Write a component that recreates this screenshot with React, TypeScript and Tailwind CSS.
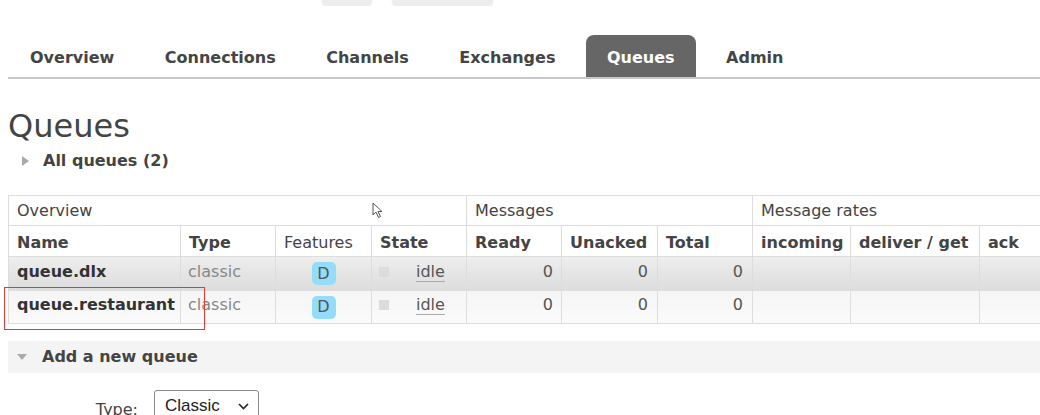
import React from "react";

const tabs = ["Overview", "Connections", "Channels", "Exchanges", "Queues", "Admin"];

const queues = [
  { name: "queue.dlx", type: "classic", state: "idle", ready: 0, unacked: 0, total: 0 },
  { name: "queue.restaurant", type: "classic", state: "idle", ready: 0, unacked: 0, total: 0 },
];

function Cursor() {
  return (
    <svg width="11" height="17" viewBox="0 0 11 17" className="absolute left-[372px] top-[202px]">
      <path d="M1 1 L1 13 L4 10 L6.5 15.5 L8.5 14.5 L6 9.5 L10 9.5 Z" fill="#fff" stroke="#555" strokeWidth="1" strokeLinejoin="round" />
    </svg>
  );
}

export default function App() {
  return (
    <div className="w-[1040px] h-[415px] overflow-hidden bg-white font-['DejaVu_Sans',Verdana,sans-serif] text-[16px] text-[#444]">
      {/* header strip, mostly scrolled off */}
      <div className="h-[6px] flex items-end overflow-hidden">
        <div className="ml-[322px] h-[20px] w-[50px] rounded-[5px] bg-[#ededed] shadow-[0_1px_2px_rgba(0,0,0,0.08)]" />
        <div className="ml-[20px] h-[20px] w-[101px] rounded-[5px] bg-[#ededed] shadow-[0_1px_2px_rgba(0,0,0,0.08)]" />
      </div>

      {/* tabs */}
      <nav className="mt-[29px] ml-2 pl-[2px] flex gap-[10.5px] border-b-2 border-[#c8c8c8]">
        {tabs.map((t) => (
          <div
            key={t}
            className={
              t === "Queues"
                ? "h-[42px] px-[21px] pt-[3px] flex items-center rounded-t-[8px] bg-[#666] text-white font-bold"
                : "h-[42px] px-5 pt-[3px] flex items-center font-bold text-[#444]"
            }
          >
            {t}
          </div>
        ))}
      </nav>

      <h1 className="mt-[29px] ml-2 text-[32px] leading-[37px] font-normal text-[#444]">Queues</h1>

      <div className="mt-[6px] pl-[22px] flex items-center gap-[14px] leading-[20px]">
        <span className="w-0 h-0 border-y-[5px] border-y-transparent border-l-[7px] border-l-[#aaa]" />
        <span className="font-bold">All queues (2)</span>
      </div>

      {/* queues table */}
      <div className="relative mt-[24px] ml-2">
        <table className="table-fixed border-collapse w-[1071px] text-left">
          <colgroup>
            <col className="w-[172px]" />
            <col className="w-[95px]" />
            <col className="w-[96px]" />
            <col className="w-[95px]" />
            <col className="w-[95px]" />
            <col className="w-[96px]" />
            <col className="w-[95px]" />
            <col className="w-[98px]" />
            <col className="w-[129px]" />
            <col className="w-[100px]" />
          </colgroup>
          <thead>
            <tr className="h-[30px]">
              <th colSpan={4} className="border border-[#ddd] px-2 pt-[1px] font-normal">Overview</th>
              <th colSpan={3} className="border border-[#ddd] px-2 pt-[1px] font-normal">Messages</th>
              <th colSpan={3} className="border border-[#ddd] px-2 pt-[1px] font-normal">Message rates</th>
            </tr>
            <tr className="h-[31px]">
              <th className="border border-[#ddd] px-2 pt-[3px] font-bold">Name</th>
              <th className="border border-[#ddd] px-2 pt-[3px] font-bold">Type</th>
              <th className="border border-[#ddd] px-2 pt-[3px] font-normal">Features</th>
              <th className="border border-[#ddd] px-2 pt-[3px] font-bold">State</th>
              <th className="border border-[#ddd] px-2 pt-[3px] font-bold">Ready</th>
              <th className="border border-[#ddd] px-2 pt-[3px] font-bold">Unacked</th>
              <th className="border border-[#ddd] px-2 pt-[3px] font-bold">Total</th>
              <th className="border border-[#ddd] px-2 pt-[3px] font-bold">incoming</th>
              <th className="border border-[#ddd] px-2 pt-[3px] font-bold">deliver / get</th>
              <th className="border border-[#ddd] px-2 pt-[3px] font-bold">ack</th>
            </tr>
          </thead>
          <tbody>
            {queues.map((q, i) => (
              <tr
                key={q.name}
                className={
                  i === 0
                    ? "h-[34px] bg-gradient-to-b from-[#eeeeee] to-[#dcdcdc]"
                    : "h-[33px] bg-gradient-to-b from-[#f5f5f5] to-[#fbfbfb]"
                }
              >
                <td className="border border-[#ddd] px-2 pb-[4px] font-bold text-[#333]">{q.name}</td>
                <td className="border border-[#ddd] px-[7px] pb-[4px] text-[#888]">{q.type}</td>
                <td className="border border-[#ddd] text-center">
                  <span className="inline-flex items-center justify-center w-[24px] h-[23px] rounded-[5px] bg-[#93dcfa] text-[#555] leading-none">
                    D
                  </span>
                </td>
                <td className="border border-[#ddd] px-[7px] pb-[4px]">
                  <div className="flex items-center">
                    <span className="w-[10px] h-[10px] bg-[#dcdcdc]" />
                    <span className="ml-[27px] text-[#555] underline decoration-[#aaa] underline-offset-[4px]">{q.state}</span>
                  </div>
                </td>
                <td className="border border-[#ddd] pr-2 pb-[4px] text-right text-[#555]">{q.ready}</td>
                <td className="border border-[#ddd] pr-[9px] pb-[4px] text-right text-[#555]">{q.unacked}</td>
                <td className="border border-[#ddd] pr-[9px] pb-[4px] text-right text-[#555]">{q.total}</td>
                <td className="border border-[#ddd]" />
                <td className="border border-[#ddd]" />
                <td className="border border-[#ddd]" />
              </tr>
            ))}
          </tbody>
        </table>
        {/* highlight box drawn over the second row */}
        <div className="absolute left-[-4px] top-[92px] w-[201px] h-[43px] border border-[#e53935]" />
      </div>

      <Cursor />

      {/* add a new queue */}
      <div className="mt-[17px] ml-2 h-[32px] bg-[#f4f4f4] flex items-center pl-[9px] gap-[15px]">
        <span className="w-0 h-0 border-x-[5px] border-x-transparent border-t-[6px] border-t-[#aaa]" />
        <span className="font-bold">Add a new queue</span>
      </div>

      <div className="mt-[17px] ml-2 flex items-start gap-4">
        <label className="w-[130px] pt-[8px] text-right text-[#444]">Type:</label>
        <div className="w-[105px] h-[32px] border border-[#8a8a8a] rounded-[3px] flex items-center justify-between pl-[10px] pr-[9px] font-['Liberation_Sans',Arial,sans-serif] text-[17px] text-[#222]">
          <span>Classic</span>
          <svg width="11" height="7" viewBox="0 0 11 7">
            <path d="M1 1 L5.5 5.5 L10 1" fill="none" stroke="#222" strokeWidth="1.6" />
          </svg>
        </div>
      </div>
    </div>
  );
}
